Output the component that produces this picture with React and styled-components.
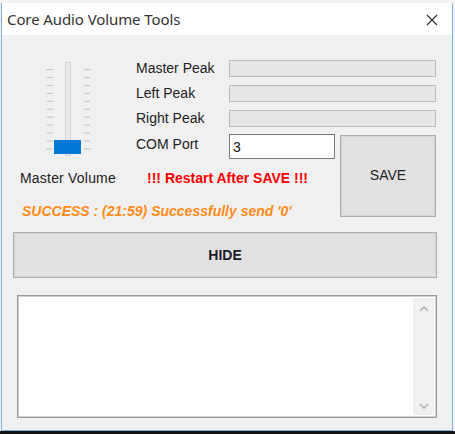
import React from "react";
import styled, { createGlobalStyle } from "styled-components";

const Global = createGlobalStyle`
  html, body { margin: 0; padding: 0; }
  body {
    background: #f2f2f2;
    font-family: "Liberation Sans", Arial, sans-serif;
    font-size: 14px;
    color: #222;
  }
`;

const Page = styled.div`
  width: 455px;
  height: 434px;
  padding-top: 3px;
  box-sizing: border-box;
  display: flex;
  flex-direction: column;
  background: #f2f2f2;
  overflow: hidden;
`;

const Window = styled.div`
  margin-left: 1px;
  width: 452px;
  box-sizing: border-box;
  border: 1px solid #7fb0e3;
  border-top: none;
  display: flex;
  flex-direction: column;
  background: #f0f0f0;
`;

const TitleBar = styled.div`
  height: 32px;
  background: #ffffff;
  display: flex;
  align-items: center;
  justify-content: space-between;
  padding: 0 14px 0 5px;
`;

const Title = styled.span`
  font-family: "Noto Sans", "Open Sans", sans-serif;
  font-size: 15px;
  color: #333;
  letter-spacing: -0.1px;
`;

const Close = styled.svg`
  width: 12px;
  height: 12px;
  margin-top: 2px;
`;

const Body = styled.div`
  height: 395px;
  box-sizing: border-box;
  padding: 21px 15px 0 11px;
  display: flex;
  flex-direction: column;
`;

const TopGrid = styled.div`
  display: grid;
  grid-template-columns: 123px 93px 111px 96px;
  grid-template-rows: 25px 25px 25px 29px 36px 30px;
`;

const SliderCell = styled.div`
  grid-column: 1;
  grid-row: 1 / span 4;
`;

const Label = styled.div`
  grid-column: 2;
  grid-row: ${(p) => p.$row};
  display: flex;
  align-items: center;
  padding-bottom: ${(p) => (p.$row === 4 ? 4 : 1)}px;
  color: #222;
`;

const Bar = styled.div`
  grid-column: 3 / span 2;
  grid-row: ${(p) => p.$row};
  align-self: start;
  margin-top: 4px;
  height: 17px;
  box-sizing: border-box;
  background: #e6e6e6;
  border: 1px solid #bcbcbc;
`;

const ComInput = styled.div`
  grid-column: 3;
  grid-row: 4;
  align-self: start;
  margin-top: 3px;
  width: 106px;
  height: 25px;
  box-sizing: border-box;
  background: #fff;
  border: 1px solid #7a7a7a;
  display: flex;
  align-items: center;
  padding-left: 3px;
  color: #111;
`;

const Button = styled.div`
  box-sizing: border-box;
  background: #e1e1e1;
  border: 1px solid #adadad;
  box-shadow: inset 0 0 0 1px #d4d4d4;
  display: flex;
  align-items: center;
  justify-content: center;
  color: ${(p) => (p.$bold ? "#1b1b2b" : "#222")};
  font-weight: ${(p) => (p.$bold ? 700 : 400)};
`;

const SaveButton = styled(Button)`
  grid-column: 4;
  grid-row: 4 / span 3;
  align-self: start;
  margin-top: 4px;
  height: 82px;
  padding-bottom: 2px;
`;

const VolumeLabel = styled.div`
  grid-column: 1;
  grid-row: 5;
  display: flex;
  align-items: center;
  padding-left: 7px;
  color: #222;
  letter-spacing: 0.2px;
`;

const Warning = styled.div`
  grid-column: 2 / span 2;
  grid-row: 5;
  display: flex;
  align-items: center;
  padding-left: 11px;
  color: #ff0000;
  font-weight: 700;
  letter-spacing: 0px;
`;

const Status = styled.div`
  grid-column: 1 / span 3;
  grid-row: 6;
  display: flex;
  align-items: center;
  padding-left: 9px;
  color: #ff8c1a;
  font-weight: 700;
  font-style: italic;
  letter-spacing: 0px;
`;

const HideButton = styled(Button)`
  margin-top: 6px;
  height: 46px;
`;

const LogBox = styled.div`
  margin: 17px 0 0 4px;
  height: 123px;
  box-sizing: border-box;
  background: #fff;
  border: 1px solid #9a9a9a;
  box-shadow: inset 0 0 0 1px #cfcfcf;
  display: flex;
  justify-content: flex-end;
  padding: 2px;
`;

const ScrollBar = styled.div`
  width: 21px;
  background: #f0f0f0;
  display: flex;
  flex-direction: column;
  justify-content: space-between;
  align-items: center;
  padding: 8px 0 6px;
`;

const Chevron = styled.svg`
  width: 10px;
  height: 6px;
`;

const BottomStrip = styled.div`
  flex: 1;
  background: #111;
`;

const ticks = Array.from({ length: 11 }, (_, i) => 13 + i * 7.93);

function VolumeSlider() {
  return (
    <svg width="123" height="104" viewBox="0 0 123 104">
      <rect x="52.5" y="6.5" width="5" height="93" fill="#e7eaea" stroke="#d6d6d6" />
      {ticks.map((y, i) => {
        const edge = i === 0 || i === ticks.length - 1;
        return (
          <g key={i} fill="#c6c6c6">
            <rect x={edge ? 33 : 34} y={y} width={edge ? 7 : 6} height="1.2" />
            <rect x="71" y={y} width={edge ? 7 : 6} height="1.2" />
          </g>
        );
      })}
      <rect x="41" y="84" width="27" height="14" fill="#0078d7" />
    </svg>
  );
}

export default function App() {
  return (
    <Page>
      <Global />
      <Window>
        <TitleBar>
          <Title>Core Audio Volume Tools</Title>
          <Close viewBox="0 0 12 12">
            <path d="M1 1 L11 11 M11 1 L1 11" stroke="#333" strokeWidth="1.2" fill="none" />
          </Close>
        </TitleBar>
        <Body>
          <TopGrid>
            <SliderCell>
              <VolumeSlider />
            </SliderCell>
            <Label $row={1}>Master Peak</Label>
            <Bar $row={1} />
            <Label $row={2}>Left Peak</Label>
            <Bar $row={2} />
            <Label $row={3}>Right Peak</Label>
            <Bar $row={3} />
            <Label $row={4}>COM Port</Label>
            <ComInput>3</ComInput>
            <SaveButton>SAVE</SaveButton>
            <VolumeLabel>Master Volume</VolumeLabel>
            <Warning>!!! Restart After SAVE !!!</Warning>
            <Status>SUCCESS : (21:59) Successfully send '0'</Status>
          </TopGrid>
          <HideButton $bold>HIDE</HideButton>
          <LogBox>
            <ScrollBar>
              <Chevron viewBox="0 0 10 6">
                <path d="M1 5 L5 1 L9 5" stroke="#a6a6a6" strokeWidth="1.3" fill="none" />
              </Chevron>
              <Chevron viewBox="0 0 10 6">
                <path d="M1 1 L5 5 L9 1" stroke="#a6a6a6" strokeWidth="1.3" fill="none" />
              </Chevron>
            </ScrollBar>
          </LogBox>
        </Body>
      </Window>
      <BottomStrip />
    </Page>
  );
}
